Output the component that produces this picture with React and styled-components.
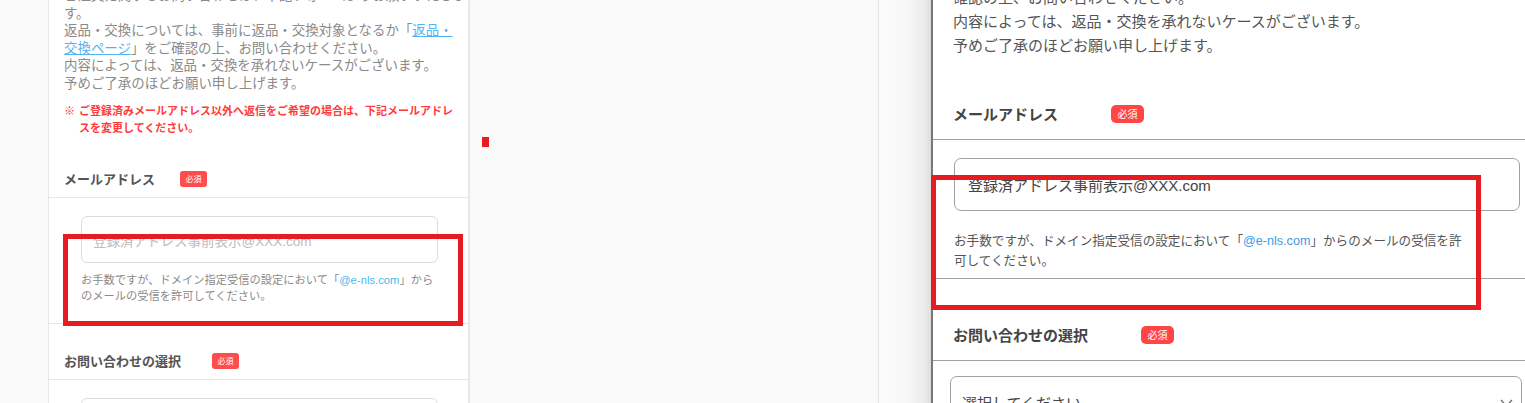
import React from "react";
import styled, { createGlobalStyle } from "styled-components";

const GlobalStyle = createGlobalStyle`
  html, body { margin: 0; padding: 0; background: #f9f9f9; }
  body {
    font-family: "Liberation Sans", "Noto Sans CJK JP", sans-serif;
    overflow: hidden;
  }
`;

const ANNOT = "#e61c20";

const Page = styled.div`
  display: flex;
  width: 1525px;
  height: 403px;
  overflow: hidden;
  background: #f9f9f9;
`;

const Gutter = styled.div`
  flex: 0 0 48px;
`;

/* ---------- mobile preview ---------- */
const MobilePanel = styled.div`
  flex: 0 0 422px;
  box-sizing: border-box;
  display: flex;
  flex-direction: column;
  background: #fff;
  border-left: 1px solid #e6e6e6;
  border-right: 2px solid #e8e8e8;
  overflow: hidden;
`;

const MobileIntro = styled.p`
  margin: -13px 0 0;
  padding: 0 0 0 15px;
  font-size: 13.45px;
  line-height: 17.5px;
  color: #8a8a8a;
  white-space: nowrap;
`;

const MobileLink = styled.a`
  color: #55b4f0;
  text-decoration: underline;
`;

const Note = styled.div`
  display: flex;
  margin: 11px 0 6px;
  padding: 0 0 0 15px;
  font-size: 11px;
  line-height: 16.5px;
  font-weight: bold;
  color: #ff3b3b;
  white-space: nowrap;
`;

const NoteMark = styled.span`
  flex: 0 0 15px;
`;

const MobileHeader = styled.div`
  display: flex;
  align-items: center;
  height: 20px;
  padding: 27px 15px 9px;
  border-bottom: 1px solid #e8e8e8;
`;

const MobileLabel = styled.span`
  font-size: 13px;
  font-weight: bold;
  color: #555;
`;

const MobileBadge = styled.span`
  display: inline-flex;
  align-items: center;
  justify-content: center;
  margin-left: ${(p) => p.$gap}px;
  width: 27px;
  height: 16px;
  border-radius: 3px;
  background: #ff4d4d;
  color: #fff;
  font-size: 8px;
`;

const MobileBody = styled.div`
  position: relative;
  padding: 18px 30px 19px 32px;
  border-bottom: ${(p) => (p.$last ? "none" : "1px solid #e8e8e8")};
`;

const MobileInput = styled.div`
  box-sizing: border-box;
  display: flex;
  align-items: center;
  height: 47px;
  padding-left: 11px;
  border: 1px solid #dcdcdc;
  border-radius: 6px;
  font-size: 13.5px;
  color: #bdbdbd;
`;

const MobileHelp = styled.p`
  margin: 9px 0 0;
  font-size: 11.25px;
  line-height: 16px;
  color: #8a8a8a;
  white-space: nowrap;
`;

const MobileDomain = styled.span`
  color: #4bb8f0;
`;

/* ---------- annotation marks ---------- */
const AnnotBox = styled.div`
  position: absolute;
  box-sizing: border-box;
  border: 5px solid ${ANNOT};
  pointer-events: none;
  z-index: 2;
`;

const GapArea = styled.div`
  flex: 0 0 408px;
  position: relative;
`;

const RedDot = styled.span`
  position: absolute;
  left: 12px;
  top: 137px;
  width: 7px;
  height: 10px;
  background: ${ANNOT};
`;

const Seam = styled.div`
  flex: 0 0 53px;
  box-sizing: border-box;
  border-left: 1px solid #e4e4e4;
  background: linear-gradient(to right, #fcfcfc 0%, #f7f7f7 55%, #ececec 85%, #dedede 100%);
`;

/* ---------- desktop preview ---------- */
const DeskPanel = styled.div`
  flex: 1;
  min-width: 0;
  display: flex;
  flex-direction: column;
  background: #fff;
  border-left: 2px solid #777;
`;

const DeskIntro = styled.p`
  margin: -14px 0 0;
  padding: 0 0 0 20px;
  font-size: 15px;
  line-height: 24px;
  color: #555;
  white-space: nowrap;
`;

const DeskHeader = styled.div`
  display: flex;
  align-items: center;
  height: 21px;
  padding: 45px 0 15px 20px;
  border-bottom: 1px solid #a0a0a0;
`;

const DeskLabel = styled.span`
  font-size: 15px;
  font-weight: bold;
  color: #444;
`;

const DeskBadge = styled.span`
  display: inline-flex;
  align-items: center;
  justify-content: center;
  margin-left: 53px;
  width: 33px;
  height: 18px;
  border-radius: 5px;
  background: #ff4545;
  color: #fff;
  font-size: 10px;
`;

const DeskBody = styled.div`
  position: relative;
  padding: ${(p) => p.$top}px 5px 7px 21px;
  border-bottom: ${(p) => (p.$last ? "none" : "1px solid #a0a0a0")};
`;

const DeskInput = styled.div`
  box-sizing: border-box;
  display: flex;
  align-items: center;
  height: 53px;
  padding-left: 13px;
  border: 1px solid #a0a0a0;
  border-radius: 7px;
  font-size: 15px;
  color: #444;
`;

const DeskHelp = styled.p`
  margin: 20px 0 0;
  font-size: 12.6px;
  line-height: 20px;
  color: #555;
  white-space: nowrap;
`;

const DeskDomain = styled.span`
  color: #3d9be6;
`;

const DeskSelect = styled.div`
  box-sizing: border-box;
  display: flex;
  align-items: center;
  justify-content: space-between;
  height: 53px;
  margin: 0 -2px 0 -4px;
  padding: 0 8px 0 11px;
  border: 1px solid #a0a0a0;
  border-radius: 7px;
  font-size: 15px;
  color: #444;
`;

const Chevron = () => (
  <svg width="13" height="8" viewBox="0 0 13 8" fill="none">
    <polyline points="1,1 6.5,7 12,1" stroke="#666" strokeWidth="1.2" />
  </svg>
);

export default function App() {
  return (
    <>
      <GlobalStyle />
      <Page>
        <Gutter />
        <MobilePanel>
          <MobileIntro>
            ご注文に関するお問い合わせは、下記フォームよりお願いいたしま
            <br />
            す。
            <br />
            返品・交換については、事前に返品・交換対象となるか「
            <MobileLink>返品・</MobileLink>
            <br />
            <MobileLink>交換ページ</MobileLink>」をご確認の上、お問い合わせください。
            <br />
            内容によっては、返品・交換を承れないケースがございます。
            <br />
            予めご了承のほどお願い申し上げます。
          </MobileIntro>
          <Note>
            <NoteMark>※</NoteMark>
            <span>
              ご登録済みメールアドレス以外へ返信をご希望の場合は、下記メールアドレ
              <br />
              スを変更してください。
            </span>
          </Note>
          <MobileHeader>
            <MobileLabel>メールアドレス</MobileLabel>
            <MobileBadge $gap={25}>必須</MobileBadge>
          </MobileHeader>
          <MobileBody>
            <MobileInput>登録済アドレス事前表示@XXX.com</MobileInput>
            <MobileHelp>
              お手数ですが、ドメイン指定受信の設定において「
              <MobileDomain>@e-nls.com</MobileDomain>」から
              <br />
              のメールの受信を許可してください。
            </MobileHelp>
            <AnnotBox style={{ left: 14, top: 36, width: 400, height: 92 }} />
          </MobileBody>
          <MobileHeader>
            <MobileLabel>お問い合わせの選択</MobileLabel>
            <MobileBadge $gap={31}>必須</MobileBadge>
          </MobileHeader>
          <MobileBody $last>
            <MobileInput>選択してください</MobileInput>
          </MobileBody>
        </MobilePanel>

        <GapArea>
          <RedDot />
        </GapArea>
        <Seam />

        <DeskPanel>
          <DeskIntro>
            確認の上、お問い合わせください。
            <br />
            内容によっては、返品・交換を承れないケースがございます。
            <br />
            予めご了承のほどお願い申し上げます。
          </DeskIntro>
          <DeskHeader>
            <DeskLabel>メールアドレス</DeskLabel>
            <DeskBadge>必須</DeskBadge>
          </DeskHeader>
          <DeskBody $top={18}>
            <DeskInput>登録済アドレス事前表示@XXX.com</DeskInput>
            <DeskHelp>
              お手数ですが、ドメイン指定受信の設定において「
              <DeskDomain>@e-nls.com</DeskDomain>」からのメールの受信を許
              <br />
              可してください。
            </DeskHelp>
            <AnnotBox style={{ left: -2, top: 35, width: 550, height: 135 }} />
          </DeskBody>
          <DeskHeader>
            <DeskLabel>お問い合わせの選択</DeskLabel>
            <DeskBadge>必須</DeskBadge>
          </DeskHeader>
          <DeskBody $top={15} $last>
            <DeskSelect>
              <span>選択してください</span>
              <Chevron />
            </DeskSelect>
          </DeskBody>
        </DeskPanel>
      </Page>
    </>
  );
}
